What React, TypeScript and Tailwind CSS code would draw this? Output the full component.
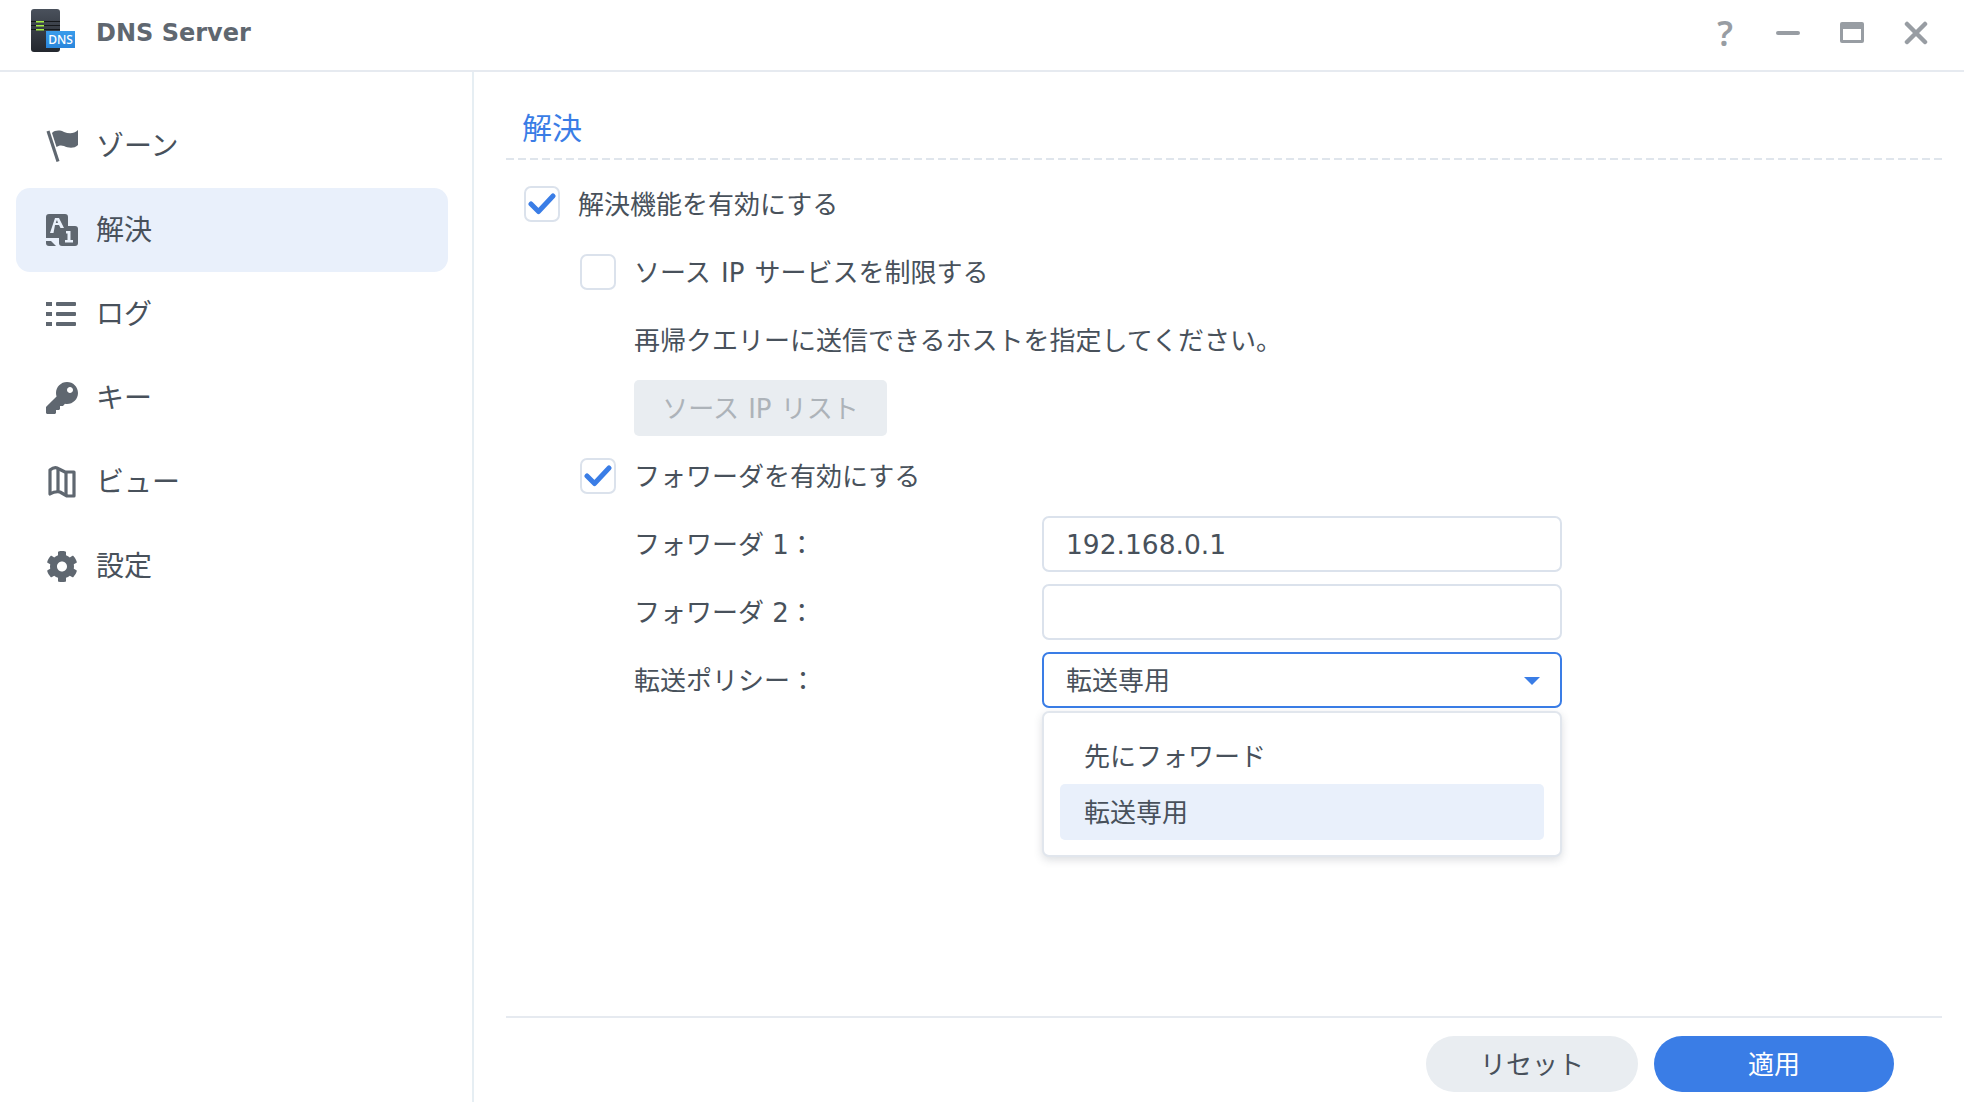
import type { ReactNode } from "react";
import { FaCog, FaKey } from "react-icons/fa";

function FlagIcon() {
  return (
    <svg width="32" height="32" viewBox="0 0 32 32" fill="#5f6770">
      <path d="M0.5 1.5 L3.5 0.5 L13.5 31 L10.5 32 Z" />
      <path d="M6 3 C9 0 14 0 18 2 C23 4 28 4 32 0 L32 15 C28 19 22 18 18 16 C15 15 12.5 15.5 10.5 17 Z" />
    </svg>
  );
}

function ResolveIcon() {
  return (
    <svg width="32" height="32" viewBox="0 0 32 32">
      <path d="M3 0 H19 Q22 0 22 3 V13 H14 V24 H0 V3 Q0 0 3 0 Z" fill="#5f6770" />
      <path d="M0 27 H5 L10 32 H3 Q0 32 0 29 Z" fill="#5f6770" />
      <rect x="13" y="12" width="19" height="20" rx="3" fill="#5f6770" />
      <path d="M4 19 L9 4 H13 L18 14 H14.5 L13 11 H9 L7.5 19 Z M9.8 8.5 L10 9 H12 L11 6 Z" fill="#eaf1fb" />
      <path d="M20 17 H24.5 V26 H27 V28.5 H19 V26 H21.5 V19.5 H20 Z" fill="#eaf1fb" />
    </svg>
  );
}

function ListIcon() {
  return (
    <svg width="32" height="26" viewBox="0 0 32 26" fill="#5f6770">
      <rect x="0" y="1" width="6" height="4" />
      <rect x="10" y="1" width="20" height="4" rx="1" />
      <rect x="0" y="11" width="6" height="4" />
      <rect x="10" y="11" width="20" height="4" rx="1" />
      <rect x="0" y="21" width="6" height="4" />
      <rect x="10" y="21" width="20" height="4" rx="1" />
    </svg>
  );
}

function MapIcon() {
  return (
    <svg width="32" height="32" viewBox="0 0 32 32" fill="none" stroke="#5f6770" strokeWidth="3.2" strokeLinejoin="round">
      <path d="M4 4 Q9 0 13 3 L19 6 H28 V30 H21 L14 26 Q9 25 4 28 Z" />
      <path d="M12 3 V26 M20 6 V30" />
    </svg>
  );
}

function LogoIcon() {
  return (
    <svg width="46" height="46" viewBox="0 0 46 46" className="mb-[4px]">
      <defs>
        <linearGradient id="tower" x1="0" y1="0" x2="0" y2="1">
          <stop offset="0" stopColor="#4a515c" />
          <stop offset="1" stopColor="#23272e" />
        </linearGradient>
        <linearGradient id="badge" x1="0" y1="0" x2="0" y2="1">
          <stop offset="0" stopColor="#3a9ceb" />
          <stop offset="1" stopColor="#2a86dc" />
        </linearGradient>
      </defs>
      <rect x="1" y="1" width="29" height="43" rx="3" fill="url(#tower)" />
      <rect x="1" y="13" width="29" height="1" fill="#15181c" />
      <rect x="1" y="17" width="29" height="1" fill="#15181c" />
      <rect x="1" y="21" width="29" height="1" fill="#15181c" />
      <rect x="6" y="13" width="8" height="1.5" fill="#a6ef42" />
      <rect x="6" y="17" width="8" height="1.5" fill="#a6ef42" />
      <rect x="6" y="21" width="8" height="1.5" fill="#a6ef42" />
      <rect x="16" y="23" width="29" height="17" fill="url(#badge)" />
      <text x="30.5" y="36" textAnchor="middle" fontSize="12" fontWeight="500" fontFamily="'Noto Sans', sans-serif" fill="#ffffff">
        DNS
      </text>
    </svg>
  );
}

function NavItem({ icon, label, active }: { icon: ReactNode; label: string; active?: boolean }) {
  return (
    <div className={`h-[84px] rounded-[14px] pl-[30px] flex items-center ${active ? "bg-[#e9f0fb]" : ""}`}>
      <div className="w-[32px] h-[32px] flex items-center justify-center">{icon}</div>
      <span className="ml-[18px] pt-[2px] text-[28px] text-[#48515b]">{label}</span>
    </div>
  );
}

function CheckBox({ checked }: { checked?: boolean }) {
  return (
    <div className="w-[36px] h-[36px] rounded-[7px] border-2 border-[#dbe2ec] bg-white flex items-center justify-center shrink-0">
      {checked && (
        <svg width="28" height="22" viewBox="0 0 28 22" fill="none" stroke="#3a7de6" strokeWidth="5" strokeLinejoin="round" strokeLinecap="round">
          <path d="M3 11 L10.5 18.5 L25 3" />
        </svg>
      )}
    </div>
  );
}

function Row({ children, indent }: { children: ReactNode; indent: string }) {
  return <div className={`h-[68px] flex items-center ${indent}`}>{children}</div>;
}

function FieldRow({ label, children }: { label: string; children: ReactNode }) {
  return (
    <div className="h-[68px] flex items-center pl-[128px]">
      <span className="w-[408px] pt-[2px] shrink-0">{label}</span>
      {children}
    </div>
  );
}

export default function App() {
  return (
    <div className="w-[1964px] h-[1102px] bg-white flex flex-col overflow-hidden text-[26px] text-[#48515b] font-['DejaVu_Sans','Noto_Sans_CJK_JP',sans-serif]">
      <header className="h-[72px] shrink-0 border-b-2 border-[#e6eaf0] flex items-center pl-[30px] pr-[36px] pb-[5px]">
        <LogoIcon />
        <span className="ml-[20px] text-[24px] font-bold text-[#5f6770]">DNS Server</span>
        <div className="ml-auto flex items-center text-[#989da3]">
          <span className="w-[24px] text-center text-[34px] font-semibold leading-none font-['Noto_Sans',sans-serif]">?</span>
          <div className="ml-[39px] w-[24px] h-[4px] rounded-full bg-[#989da3]" />
          <div className="ml-[40px] w-[24px] h-[21px] rounded-[2px] bg-[#989da3] pt-[7px] px-[3px] pb-[3px]">
            <div className="w-full h-full bg-white" />
          </div>
          <svg className="ml-[40px]" width="24" height="24" viewBox="0 0 24 24" stroke="#989da3" strokeWidth="4.5" strokeLinecap="round">
            <path d="M3 3 L21 21 M21 3 L3 21" />
          </svg>
        </div>
      </header>

      <div className="flex flex-1 min-h-0">
        <aside className="w-[474px] shrink-0 border-r-2 border-[#e6eef3] pl-[16px] pr-[24px] pt-[32px]">
          <NavItem icon={<FlagIcon />} label="ゾーン" />
          <NavItem icon={<ResolveIcon />} label="解決" active />
          <NavItem icon={<ListIcon />} label="ログ" />
          <NavItem icon={<FaKey size={32} color="#5f6770" />} label="キー" />
          <NavItem icon={<MapIcon />} label="ビュー" />
          <NavItem icon={<FaCog size={35} color="#5f6770" />} label="設定" />
        </aside>

        <main className="flex-1 min-w-0 pl-[32px] pr-[22px] flex flex-col">
          <div className="h-[86px] shrink-0 flex items-center pl-[16px] pt-[26px] text-[30px] text-[#3a7de6]">
            <span>解決</span>
          </div>
          <div className="h-[2px] shrink-0 mb-[10px] bg-[repeating-linear-gradient(90deg,#dfe5ec_0_8px,transparent_8px_12px)]" />

          <Row indent="pl-[18px]">
            <CheckBox checked />
            <span className="ml-[18px] pt-[2px]">解決機能を有効にする</span>
          </Row>
          <Row indent="pl-[74px]">
            <CheckBox />
            <span className="ml-[18px] pt-[2px]">
              ソース <span className="mx-[2px]">IP</span> サービスを制限する
            </span>
          </Row>
          <Row indent="pl-[128px] pt-[2px]">再帰クエリーに送信できるホストを指定してください。</Row>
          <Row indent="pl-[128px]">
            <div className="w-[253px] h-[56px] rounded-[5px] bg-[#e9edf1] text-[#adb3b9] pt-[2px] flex items-center justify-center">
              <span>
                ソース <span className="mx-[1px]">IP</span> リスト
              </span>
            </div>
          </Row>
          <Row indent="pl-[74px]">
            <CheckBox checked />
            <span className="ml-[18px] pt-[2px]">フォワーダを有効にする</span>
          </Row>

          <FieldRow label="フォワーダ 1：">
            <div className="w-[520px] h-[56px] rounded-[7px] border-2 border-[#dbe2ec] pl-[22px] pt-[2px] text-[26.5px] flex items-center">192.168.0.1</div>
          </FieldRow>
          <FieldRow label="フォワーダ 2：">
            <div className="w-[520px] h-[56px] rounded-[7px] border-2 border-[#dbe2ec]" />
          </FieldRow>
          <FieldRow label="転送ポリシー：">
            <div className="relative w-[520px] h-[56px]">
              <div className="h-full rounded-[7px] border-2 border-[#3a7de6] pl-[22px] pr-[20px] pt-[2px] flex items-center justify-between">
                <span>転送専用</span>
                <div className="w-0 h-0 border-x-[8px] border-x-transparent border-t-[8px] border-t-[#3a7de6]" />
              </div>
              <div className="absolute left-0 right-0 top-[59px] h-[146px] rounded-[7px] border-2 border-[#e1e6ed] bg-white shadow-[0_3px_8px_rgba(60,70,90,0.18)] px-[16px] pt-[15px]">
                <div className="h-[56px] pl-[24px] pt-[2px] flex items-center">先にフォワード</div>
                <div className="h-[56px] pl-[24px] pt-[2px] rounded-[5px] bg-[#e9f0fb] flex items-center">転送専用</div>
              </div>
            </div>
          </FieldRow>

          <div className="mt-auto h-[86px] shrink-0 border-t-2 border-[#e6eaf0] flex justify-end items-start pt-[18px] pr-[48px]">
            <div className="w-[212px] h-[56px] rounded-full bg-[#e9edf1] pt-[2px] flex items-center justify-center">リセット</div>
            <div className="ml-[16px] w-[240px] h-[56px] rounded-full bg-[#3a7de6] text-white pt-[2px] flex items-center justify-center">適用</div>
          </div>
        </main>
      </div>
    </div>
  );
}
